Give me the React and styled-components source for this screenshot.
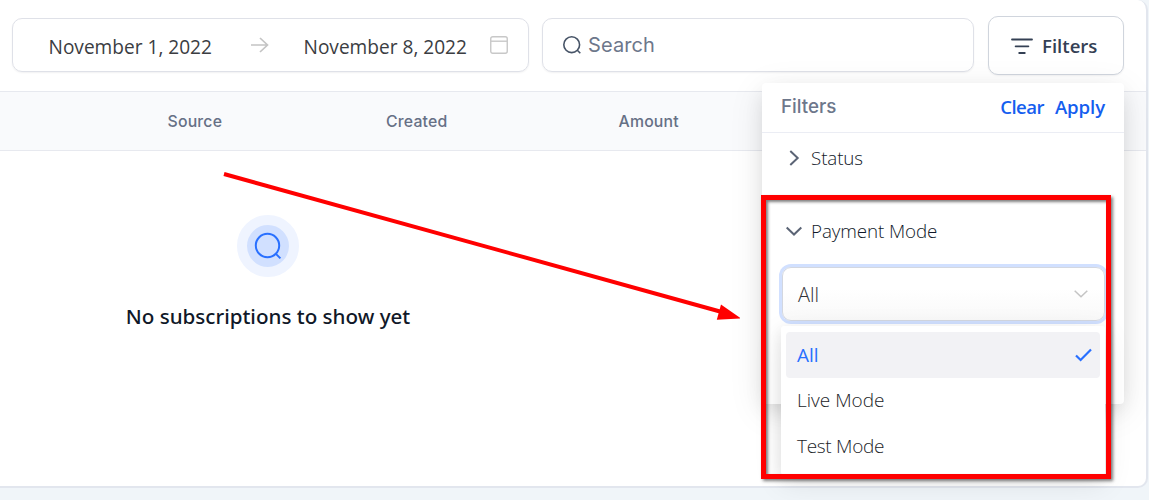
import React from "react";
import styled, { createGlobalStyle } from "styled-components";

function App() {
  return (
    <>
      <GlobalStyle />
      <Card>
        <Toolbar>
          <DateRange>
            <DateText>November 1, 2022</DateText>
            <ArrowIcon viewBox="0 0 18 16">
              <path d="M0 8H16.5M9 1L16.5 8L9 15" />
            </ArrowIcon>
            <DateText>November 8, 2022</DateText>
            <CalendarIcon viewBox="0 0 18 18">
              <rect x="0.75" y="0.75" width="16.5" height="16.5" rx="2" />
              <path d="M1 5.2H17" />
            </CalendarIcon>
          </DateRange>
          <SearchBox>
            <SearchIcon viewBox="0 0 18 18">
              <circle cx="8.7" cy="8.7" r="7.9" />
              <path d="M14.3 14.3L17.3 17.3" />
            </SearchIcon>
            <Placeholder>Search</Placeholder>
          </SearchBox>
          <FiltersButton>
            <LinesIcon viewBox="0 0 22 16">
              <path d="M1 1.5H21M4.6 8.3H17.4M8.2 15H13.8" />
            </LinesIcon>
            <ButtonLabel>Filters</ButtonLabel>
          </FiltersButton>
        </Toolbar>
        <TableHead>
          <HeadCell $width={218.5}>Source</HeadCell>
          <HeadCell $width={232.5}>Created</HeadCell>
          <HeadCell>Amount</HeadCell>
        </TableHead>
        <Empty>
          <EmptyBadge>
            <EmptyIcon viewBox="0 0 28 28">
              <circle cx="13.5" cy="13.5" r="11.7" />
              <path d="M21.6 21.6L26.4 26.4" />
            </EmptyIcon>
          </EmptyBadge>
          <EmptyText>No subscriptions to show yet</EmptyText>
        </Empty>
      </Card>

      <Panel>
        <PanelHeader>
          <PanelTitle>Filters</PanelTitle>
          <PanelActions>
            <Action $spacing="-0.55px">Clear</Action>
            <Action $spacing="-0.1px">Apply</Action>
          </PanelActions>
        </PanelHeader>
        <Section $height={73}>
          <Chevron viewBox="0 0 16 16">
            <path d="M4.8 1L12.2 8L4.8 15" />
          </Chevron>
          <SectionLabel>Status</SectionLabel>
        </Section>
        <Section $height={59}>
          <Chevron viewBox="0 0 16 16">
            <path d="M1.2 4.5L8.5 11.5L15.8 4.5" />
          </Chevron>
          <SectionLabel>Payment Mode</SectionLabel>
        </Section>
        <Select>
          <SelectValue>All</SelectValue>
          <SelectArrow viewBox="0 0 14 8">
            <path d="M0.7 0.7L7 6.8L13.3 0.7" />
          </SelectArrow>
        </Select>
        <Menu>
          <Option $active>
            All
            <CheckIcon viewBox="0 0 17 14">
              <path d="M1 7.5L5.6 12L16 1.5" />
            </CheckIcon>
          </Option>
          <Option>Live Mode</Option>
          <Option $spacing="-0.3px">Test Mode</Option>
        </Menu>
      </Panel>

      <Highlight />
      <Pointer viewBox="0 0 520 150">
        <path d="M4 4L500 141.5" stroke="#ff0000" strokeWidth="4" />
        <path d="M501 134.5L521 148.5L496.8 149.8Z" fill="#ff0000" />
      </Pointer>
    </>
  );
}

export default App;

const GlobalStyle = createGlobalStyle`
  * {
    box-sizing: border-box;
  }
  body {
    margin: 0;
    height: 500px;
    overflow: hidden;
    background-color: #f0f5f9;
    font-family: "Open Sans", "Noto Sans", sans-serif;
  }
  svg {
    display: block;
    flex-shrink: 0;
    fill: none;
  }
`;

const Card = styled.div`
  width: 1148px;
  height: 488px;
  background-color: white;
  border: 2px solid #e2e6ee;
  border-top-width: 0;
  border-left: none;
  border-radius: 0 10px 10px 0;
`;

const Toolbar = styled.div`
  display: flex;
  align-items: flex-start;
  height: 91px;
  padding: 16px 22px 0 12px;
`;

const DateRange = styled.div`
  display: flex;
  align-items: center;
  width: 517px;
  height: 54px;
  margin-top: 2px;
  padding: 2px 20px 0 35.5px;
  border: 1px solid #dfe1e8;
  border-radius: 10px;
  box-shadow: 0 1px 2px rgba(16, 24, 40, 0.06);
`;

const DateText = styled.span`
  width: 165px;
  padding-top: 2px;
  font-size: 19.1px;
  white-space: nowrap;
  color: #3b3d42;
`;

const ArrowIcon = styled.svg`
  width: 18px;
  height: 16px;
  margin: 0 35px 3px 37px;
  stroke: #c4c4c4;
  stroke-width: 1.7;
`;

const CalendarIcon = styled.svg`
  width: 18px;
  height: 18px;
  margin: 0 0 2px auto;
  stroke: #c8c8c8;
  stroke-width: 1.4;
`;

const SearchBox = styled.div`
  display: flex;
  align-items: center;
  width: 432px;
  height: 54px;
  margin: 2px 14px 0 13px;
  padding-left: 20px;
  border: 1px solid #dfe1e8;
  border-radius: 10px;
  box-shadow: 0 1px 2px rgba(16, 24, 40, 0.06);
`;

const SearchIcon = styled.svg`
  width: 18px;
  height: 18px;
  stroke: #475467;
  stroke-width: 1.6;
`;

const Placeholder = styled.span`
  margin-left: 7px;
  font-family: Inter, sans-serif;
  font-size: 20px;
  letter-spacing: 0.1px;
  color: #6d778b;
`;

const FiltersButton = styled.button`
  display: flex;
  align-items: center;
  width: 136px;
  height: 59px;
  padding: 0 0 0 22px;
  font-family: inherit;
  background-color: white;
  border: 1px solid #d0d5dd;
  border-radius: 10px;
  box-shadow: 0 1px 2px rgba(16, 24, 40, 0.06);
`;

const LinesIcon = styled.svg`
  width: 22px;
  height: 16px;
  stroke: #344054;
  stroke-width: 1.8;
  stroke-linecap: round;
`;

const ButtonLabel = styled.span`
  margin-left: 9px;
  font-size: 18.6px;
  font-weight: 600;
  color: #344054;
`;

const TableHead = styled.div`
  display: flex;
  align-items: center;
  height: 60px;
  padding-left: 167.5px;
  background-color: #f9fafc;
  border-top: 1px solid #e7e9ef;
  border-bottom: 1px solid #e7e9ef;
`;

const HeadCell = styled.span`
  width: ${(props) => (props.$width ? `${props.$width}px` : "auto")};
  font-family: Inter, sans-serif;
  font-size: 15.8px;
  font-weight: 500;
  letter-spacing: 0.2px;
  color: #667085;
`;

const Empty = styled.div`
  display: flex;
  flex-direction: column;
  align-items: center;
  width: 536px;
  padding-top: 64px;
`;

const EmptyBadge = styled.div`
  display: grid;
  place-items: center;
  width: 62px;
  height: 62px;
  border: 10px solid #eff4ff;
  border-radius: 50%;
  background-color: #d1e0ff;
`;

const EmptyIcon = styled.svg`
  width: 28px;
  height: 28px;
  stroke: #2970ff;
  stroke-width: 2;
`;

const EmptyText = styled.span`
  margin-top: 25px;
  font-family: "Noto Sans", sans-serif;
  font-size: 20.6px;
  font-weight: 500;
  white-space: nowrap;
  color: #101828;
`;

const Panel = styled.div`
  position: absolute;
  top: 83px;
  left: 762px;
  width: 362px;
  height: 321px;
  background-color: white;
  border-radius: 4px;
  box-shadow: 0 8px 20px -4px rgba(0, 0, 0, 0.12),
    0 8px 36px rgba(0, 0, 0, 0.09);
`;

const PanelHeader = styled.div`
  display: flex;
  align-items: center;
  justify-content: space-between;
  height: 50px;
  padding: 0 19px;
  border-bottom: 1px solid #ebedf4;
`;

const PanelTitle = styled.span`
  padding-bottom: 3px;
  font-family: Inter, sans-serif;
  font-size: 18.8px;
  font-weight: 500;
  color: #6d778b;
`;

const PanelActions = styled.div`
  display: flex;
  gap: 11px;
  padding-bottom: 2px;
`;

const Action = styled.span`
  font-size: 18.6px;
  font-weight: 600;
  letter-spacing: ${(props) => props.$spacing};
  color: #155eef;
`;

const Section = styled.div`
  display: flex;
  align-items: flex-start;
  height: ${(props) => props.$height}px;
  padding: 12px 0 0 23px;
`;

const Chevron = styled.svg`
  width: 17px;
  height: 16px;
  margin-top: 5px;
  stroke: #5b6475;
  stroke-width: 2;
`;

const SectionLabel = styled.span`
  margin-left: 9px;
  font-size: 18.8px;
  font-weight: 300;
  line-height: 26px;
  letter-spacing: -0.1px;
  color: #101828;
`;

const Select = styled.div`
  display: flex;
  align-items: center;
  justify-content: space-between;
  height: 54px;
  margin: 2px 19px 0 20px;
  padding: 0 16px 0 15px;
  background: linear-gradient(white 40%, #f9f9f9);
  border: 1px solid #d3d7e0;
  border-radius: 9px;
  box-shadow: 0 0 0 3px #d1e0ff;
`;

const SelectValue = styled.span`
  font-size: 20px;
  font-weight: 300;
  color: #303236;
`;

const SelectArrow = styled.svg`
  width: 14px;
  height: 8px;
  stroke: #c4c4c4;
  stroke-width: 1.5;
`;

const Menu = styled.div`
  position: absolute;
  top: 243px;
  left: 19px;
  width: 324px;
  height: 149px;
  padding: 6px 5px;
  background-color: white;
  border-radius: 3px;
  box-shadow: 0 5px 12px 2px rgba(0, 0, 0, 0.06),
    0 8px 30px rgba(0, 0, 0, 0.09);
`;

const Option = styled.div`
  display: flex;
  align-items: center;
  justify-content: space-between;
  height: 45.6px;
  padding: 0 8px 0 11px;
  font-size: 19px;
  font-weight: ${(props) => (props.$active ? 400 : 300)};
  letter-spacing: ${(props) => props.$spacing || "normal"};
  color: ${(props) => (props.$active ? "#2970ff" : "#222428")};
  background-color: ${(props) => (props.$active ? "#f2f2f5" : "transparent")};
  border-radius: 4px;
`;

const CheckIcon = styled.svg`
  width: 17px;
  height: 14px;
  stroke: #2970ff;
  stroke-width: 2.2;
`;

/* annotations over the page */
const Highlight = styled.div`
  position: absolute;
  top: 195px;
  left: 761px;
  width: 350px;
  height: 284px;
  border: 5px solid #ff0000;
  box-shadow: 2px 2px 3px rgba(0, 0, 0, 0.5),
    inset 2px 2px 3px rgba(0, 0, 0, 0.5);
`;

const Pointer = styled.svg`
  position: absolute;
  top: 170px;
  left: 220px;
  width: 520px;
  height: 150px;
`;
